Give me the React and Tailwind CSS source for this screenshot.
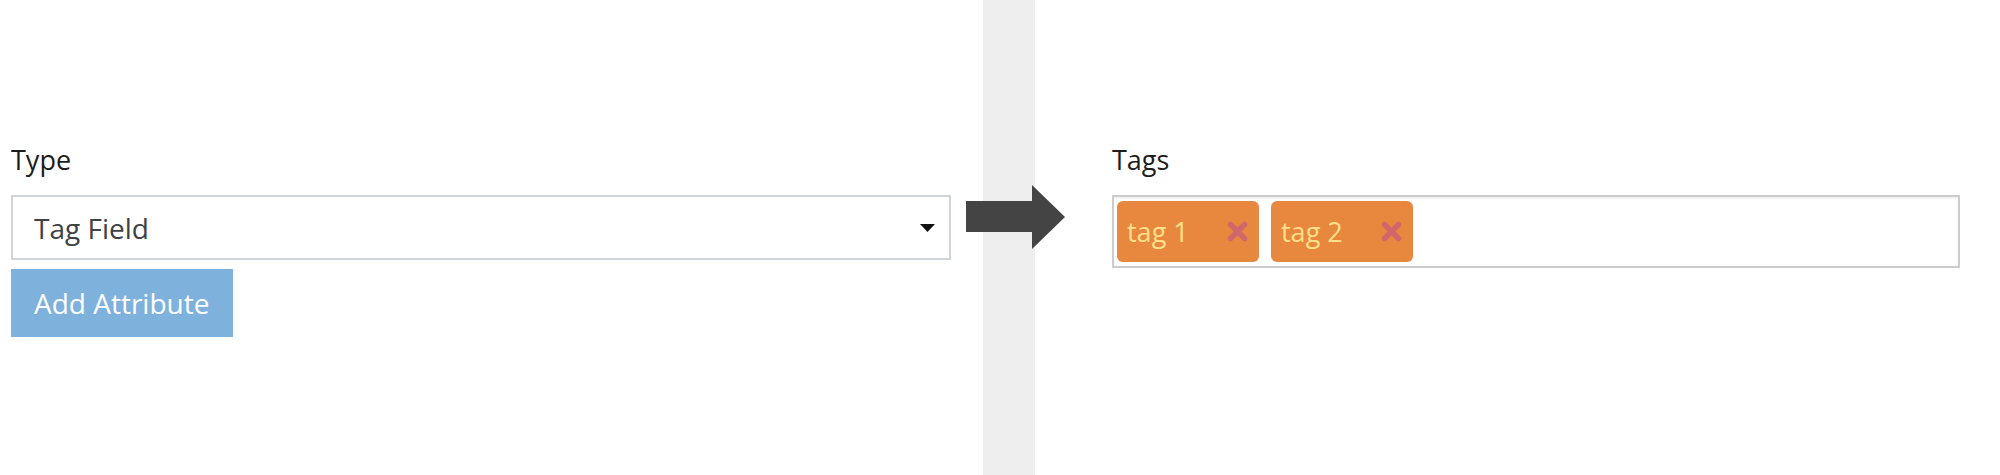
import React from 'react';

const font = { fontFamily: '"Open Sans", "Noto Sans", sans-serif' };

function RemoveIcon() {
    return (
        <svg width="21" height="21" viewBox="0 0 21 21" className="shrink-0">
            <path d="M3.5 3.5 L17.5 17.5 M17.5 3.5 L3.5 17.5" stroke="#d0676a" strokeWidth="5.5" strokeLinecap="round" />
        </svg>
    );
}

function Tag({ label }) {
    return (
        <div className="flex items-center justify-between w-[142px] h-[61px] pl-[10px] pr-[11px] rounded-[6px] bg-[#e8873e]">
            <span className="text-[27px] font-medium text-[#fde08a] leading-none whitespace-nowrap">{label}</span>
            <RemoveIcon />
        </div>
    );
}

export default function App() {
    return (
        <div className="flex h-[475px] w-[2000px] bg-white overflow-hidden" style={font}>
            {/* Left: attribute form */}
            <div className="w-[983px] pl-[11px] pr-[32px] pt-[141px]">
                <div className="text-[27px] font-medium leading-[37px] text-[#1d1d1d] mb-[17px]">Type</div>
                <div className="flex items-center justify-between h-[65px] border-2 border-[#d1d5da] pl-[21px] pr-[14px]">
                    <span className="text-[28px] font-medium text-[#3c4245]">Tag Field</span>
                    <svg width="15" height="8" viewBox="0 0 15 8">
                        <path d="M0 0 H15 L7.5 8 Z" fill="#111" />
                    </svg>
                </div>
                <button className="mt-[9px] flex items-center w-[222px] h-[68px] pl-[23px] bg-[#7eb2dc] text-white text-[28px] font-medium">
                    Add Attribute
                </button>
            </div>

            {/* Divider with arrow */}
            <div className="relative w-[52px] bg-[#eeeeee]">
                <svg className="absolute left-[-17px] top-[185px]" width="99" height="64" viewBox="0 0 99 64">
                    <path d="M0 16 H66 V0 L99 32 L66 64 V47 H0 Z" fill="#444444" />
                </svg>
            </div>

            {/* Right: result */}
            <div className="flex-1 pl-[77px] pr-[40px] pt-[141px]">
                <div className="text-[27px] font-medium leading-[37px] text-[#1d1d1d] mb-[17px]">Tags</div>
                <div className="flex items-center gap-[12px] h-[73px] border-2 border-[#cccccc] pl-[3px] shadow-[inset_0_2px_2px_rgba(0,0,0,0.06)]">
                    <Tag label="tag 1" />
                    <Tag label="tag 2" />
                </div>
            </div>
        </div>
    );
}
